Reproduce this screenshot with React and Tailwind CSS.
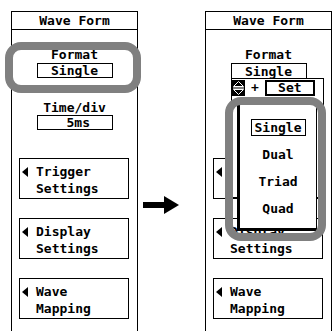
import React from 'react';

const font = "font-['DejaVu_Sans_Mono',monospace] font-bold text-[13px] leading-[15px] text-black";

const Tri = () => (
    <svg width="6" height="10" viewBox="0 0 6 10" className="shrink-0">
        <polygon points="6,0 6,10 0,5" fill="black" />
    </svg>
);

const MenuButton = ({ line1, line2 }) => (
    <div className="ml-[7px] w-[110px] h-[41px] border border-black flex flex-col pt-[5px]">
        <div className="flex items-center h-[15px] pl-[2px] gap-[8px]">
            <Tri />
            <span>{line1}</span>
        </div>
        <div className="h-[15px] mt-[2px] pl-[16px]">{line2}</div>
    </div>
);

const Panel = ({ dropdown }) => (
    <div className={`relative w-[127px] h-[330px] border border-b-0 border-black flex flex-col shrink-0 ${font}`}>
        <div className="h-[18px] border-b border-black flex items-center justify-center">Wave Form</div>
        <div className="mt-[17px] text-center">Format</div>
        <div
            className={`mx-auto mt-[1px] w-[76px] h-[15px] border border-black flex items-center justify-center ${
                dropdown ? 'border-b-0' : ''
            }`}
        >
            Single
        </div>
        <div className="mt-[22px] text-center">Time/div</div>
        <div className="mx-auto w-[76px] h-[15px] border border-black flex items-center pl-[29px]">5ms</div>
        <div className="mt-[28px] flex flex-col gap-[19px]">
            <MenuButton line1="Trigger" line2="Settings" />
            <MenuButton line1="Display" line2="Settings" />
            <MenuButton line1="Wave" line2="Mapping" />
        </div>
    </div>
);

const UpDown = () => (
    <svg width="13" height="16" viewBox="0 0 13 16">
        <rect width="13" height="16" fill="black" />
        <polygon points="6.5,1.5 11.5,6.5 1.5,6.5" fill="none" stroke="white" strokeWidth="1" />
        <polygon points="6.5,14.5 11.5,9.5 1.5,9.5" fill="none" stroke="white" strokeWidth="1" />
        <line x1="1" y1="8" x2="12" y2="8" stroke="white" strokeWidth="1" />
    </svg>
);

export default function App() {
    return (
        <div className="relative w-[332px] h-[331px] overflow-hidden bg-white">
            <div className="flex items-start pt-[11px] pl-[11px]">
                <Panel />
                <div className="w-[76px] h-[300px] flex items-start pt-[185px] pl-[5px]">
                    <svg width="36" height="18" viewBox="0 0 36 18">
                        <rect x="0" y="6" width="22" height="6" fill="black" />
                        <polygon points="21,0 36,9 21,18" fill="black" />
                    </svg>
                </div>
                <Panel dropdown />
            </div>

            {/* left highlight */}
            <div className="absolute left-[5px] top-[42px] w-[136px] h-[51px] border-[8px] border-[#808080] rounded-[16px]" />

            {/* right dropdown */}
            <div className={`absolute left-[231px] top-[78px] w-[93px] h-[120px] bg-white border border-black ${font}`}>
                <div className="flex items-center h-[17px]">
                    <UpDown />
                    <span className="ml-[6px]">+</span>
                    <div className="ml-[6px] w-[50px] h-[16px] border-2 border-black flex items-center justify-center">Set</div>
                </div>
            </div>

            <div
                className={`absolute left-[237px] top-[104px] w-[80px] h-[127px] bg-white border border-black border-l-[3px] border-b-[3px] flex flex-col items-center pt-[14px] ${font}`}
            >
                <div className="w-[55px] h-[17px] border border-black flex items-center justify-center">Single</div>
                <div className="mt-[10px] h-[17px] flex items-center">Dual</div>
                <div className="mt-[10px] h-[17px] flex items-center">Triad</div>
                <div className="mt-[10px] h-[17px] flex items-center">Quad</div>
            </div>

            {/* right highlight */}
            <div className="absolute left-[225px] top-[97px] w-[101px] h-[144px] border-[8px] border-[#808080] rounded-[16px]" />
        </div>
    );
}
